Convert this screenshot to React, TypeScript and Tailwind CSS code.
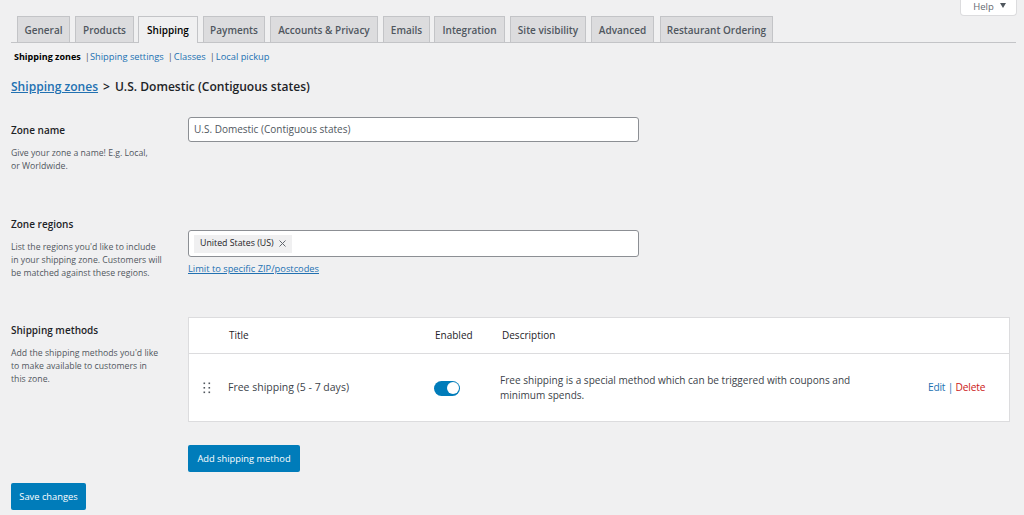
import type { ReactNode } from "react";

const tabs: [string, string][] = [
  ["General", "w-[53px]"],
  ["Products", "w-[59px]"],
  ["Shipping", "w-[60px] -ml-px"],
  ["Payments", "w-[62px]"],
  ["Accounts & Privacy", "w-[108px]"],
  ["Emails", "w-[47px]"],
  ["Integration", "w-[71px] -ml-px"],
  ["Site visibility", "w-[76px]"],
  ["Advanced", "w-[63px]"],
  ["Restaurant Ordering", "w-[113px] ml-px"],
];

function Tab({ label, size }: { label: string; size: string }) {
  const active = label === "Shipping";
  return (
    <div
      className={`${size} ${
        active
          ? "h-[27px] -mb-px border border-b-0 border-[#c3c4c7] bg-[#f0f0f1] text-[#000] font-semibold text-[10px] leading-[27px] text-center"
          : "h-[26px] border border-b-0 border-[#c3c4c7] bg-[#dcdcde] text-[#50575e] font-semibold text-[10px] leading-[26px] text-center"
      }`}
    >
      {label}
    </div>
  );
}

function Left({ title, top, children }: { title: string; top: string; children: ReactNode }) {
  return (
    <div className={`w-[177px] shrink-0 ${top}`}>
      <div className="text-[10px] leading-[16px] font-semibold text-[#1d2327]">{title}</div>
      <p className="mt-[8.5px] text-[8.7px] leading-[13px] text-[#50575e]">{children}</p>
    </div>
  );
}

export default function App() {
  return (
    <div className="relative w-[1024px] h-[515px] overflow-hidden bg-[#f0f0f1] text-[#1d2327] font-['Open_Sans','Noto_Sans',sans-serif]">
      <div className="absolute right-[7px] top-0 w-[57px] h-[16px] bg-white rounded-b border border-t-0 border-[#dcdcde] flex items-start justify-center gap-[6px] text-[9.5px] leading-[13px] text-[#646970] pl-[2px]">
        <span>Help</span>
        <svg className="mt-[3px]" width="6" height="5" viewBox="0 0 6 5"><path d="M0 0h6L3 5z" fill="#50575e" /></svg>
      </div>

      <div className="ml-[11px] mr-[8px] pt-[16px]">
        <div className="flex gap-[5px] pl-[6px] h-[27px] border-b border-[#c3c4c7]">
          {tabs.map(([t, w]) => (
            <Tab key={t} label={t} size={w} />
          ))}
        </div>

        <div className="mt-[7px] flex items-center h-[14px] text-[9.3px] leading-[14px] pl-[3px] text-[#50575e]">
          <span className="font-bold text-[9px] text-black">Shipping zones</span>
          <span className="ml-[4px]">|</span>
          <span className="text-[#2271b1]">Shipping settings</span>
          <span className="ml-[4px]">|</span>
          <span className="text-[#2271b1] ml-[1px]">Classes</span>
          <span className="ml-[4px]">|</span>
          <span className="text-[#2271b1] ml-[1px]">Local pickup</span>
        </div>

        <div className="mt-[14px] h-[18px] flex items-center text-[12.05px] font-semibold leading-[18px]">
          <span className="text-[#2271b1] underline">Shipping zones</span>
          <span className="ml-[5px]">&gt;</span>
          <span className="ml-[5px]">U.S. Domestic (Contiguous states)</span>
        </div>

        <div className="mt-[21px] flex h-[99px]">
          <Left title="Zone name" top="pt-[5px]">
            Give your zone a name! E.g. Local,<br />or Worldwide.
          </Left>
          <div className="w-[451px] h-[25px] bg-white border border-[#8c8f94] rounded-[3px] flex items-center pl-[5px] text-[10px] text-[#50575e]">
            U.S. Domestic (Contiguous states)
          </div>
        </div>

        <div className="flex h-[101px]">
          <Left title="Zone regions" top="">
            List the regions you'd like to include<br />in your shipping zone. Customers will<br />be matched against these regions.
          </Left>
          <div className="w-[451px] pt-[14px]">
            <div className="h-[27px] bg-white border border-[#8c8f94] rounded-[3px] flex items-center pl-[5px]">
              <div className="h-[18px] bg-[#f0f0f1] flex items-center pl-[6px] pr-[6px] text-[8.8px] text-[#1d2327]">
                United States (US)
                <svg className="ml-[5px]" width="7" height="7" viewBox="0 0 7 7" stroke="#646970" strokeWidth="1">
                  <path d="M0.5 0.5l6 6M6.5 0.5l-6 6" />
                </svg>
              </div>
            </div>
            <div className="mt-[5px] text-[9.3px] leading-[13px] text-[#2271b1] underline">Limit to specific ZIP/postcodes</div>
          </div>
        </div>

        <div className="flex">
          <Left title="Shipping methods" top="pt-[5px]">
            Add the shipping methods you'd like<br />to make available to customers in<br />this zone.
          </Left>
          <div className="w-[822px]">
            <div className="h-[105px] bg-white border border-[#dcdcde] flex flex-col">
              <div className="h-[36px] border-b border-[#dcdcde] flex items-center text-[10px] font-medium text-[#1d2327]">
                <span className="ml-[40px] w-[206px]">Title</span>
                <span className="w-[67px]">Enabled</span>
                <span>Description</span>
              </div>
              <div className="flex-1 flex items-center text-[10px]">
                <svg className="ml-[14px]" width="8" height="12" viewBox="0 0 8 12" fill="#50575e">
                  <rect x="0.5" y="0.5" width="1.6" height="1.6" />
                  <rect x="5.5" y="0.5" width="1.6" height="1.6" />
                  <rect x="0.5" y="5" width="1.6" height="1.6" />
                  <rect x="5.5" y="5" width="1.6" height="1.6" />
                  <rect x="0.5" y="9.5" width="1.6" height="1.6" />
                  <rect x="5.5" y="9.5" width="1.6" height="1.6" />
                </svg>
                <span className="ml-[17px] w-[206px] text-[10.5px] font-medium text-[#3c434a]">Free shipping (5 - 7 days)</span>
                <span className="mt-px w-[26px] h-[15px] rounded-full bg-[#007cba] flex items-center justify-end pr-[1px]">
                  <span className="w-[12px] h-[12px] rounded-full bg-white" />
                </span>
                <span className="ml-[40px] w-[375px] text-[10.05px] leading-[15px] text-[#3c434a]">
                  Free shipping is a special method which can be triggered with coupons and minimum spends.
                </span>
                <span className="ml-[53px] text-[10.2px] tracking-[-0.2px]">
                  <span className="text-[#2271b1]">Edit</span>
                  <span className="text-[#2271b1]"> | </span>
                  <span className="text-[#cc1818]">Delete</span>
                </span>
              </div>
            </div>
            <div className="mt-[23px] w-[112px] h-[27px] pt-px rounded-[2px] bg-[#007cba] text-white text-[9.3px] flex items-center justify-center">
              Add shipping method
            </div>
          </div>
        </div>

        <div className="mt-[11px] w-[75px] h-[27px] rounded-[2px] bg-[#007cba] text-white text-[9.3px] flex items-center justify-center">
          Save changes
        </div>
      </div>
    </div>
  );
}
